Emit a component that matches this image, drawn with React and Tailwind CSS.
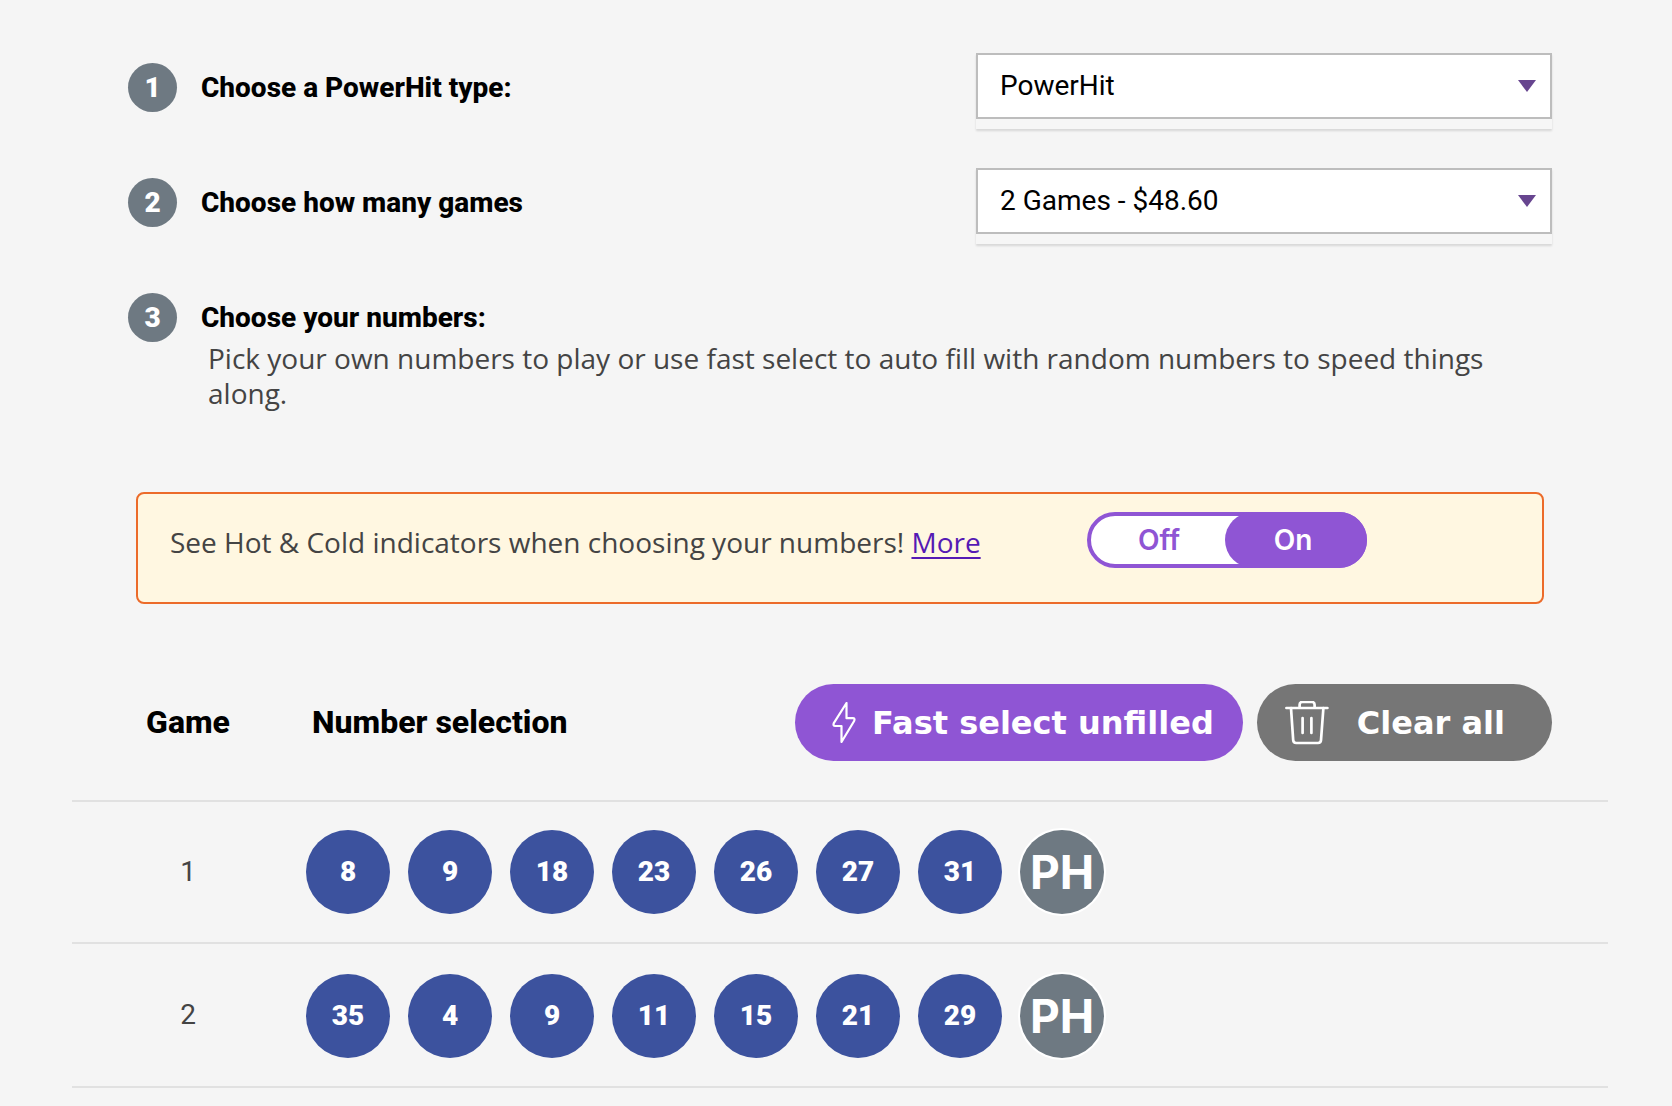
import React, { useState } from "react";

const games = [
  { id: 1, numbers: [8, 9, 18, 23, 26, 27, 31] },
  { id: 2, numbers: [35, 4, 9, 11, 15, 21, 29] },
];

function StepBadge({ children }) {
  return (
    <span className="flex size-[49px] shrink-0 items-center justify-center rounded-full bg-[#6e7982] text-[28px] font-black text-white">
      {children}
    </span>
  );
}

function SelectBox({ id, options }) {
  return (
    <div className="w-[576px] bg-[#f6f6f6] pb-2.5 shadow-[0_2px_2px_rgba(0,0,0,0.12)]">
      <div className="relative">
        <select
          id={id}
          className="block h-[66px] w-full appearance-none rounded-none border-2 border-[#bdbdbd] bg-white pl-[22px] pr-12 text-[28px] text-black"
        >
          {options.map((option) => (
            <option key={option}>{option}</option>
          ))}
        </select>
        <svg
          className="pointer-events-none absolute right-4 top-[27px] h-3 w-[18px] fill-[#67458f]"
          viewBox="0 0 18 12"
          aria-hidden="true"
        >
          <path d="M0 0h18L9 12z" />
        </svg>
      </div>
    </div>
  );
}

function SelectStep({ number, id, label, options }) {
  return (
    <div className="flex items-start justify-between">
      <div className="flex items-center gap-6 pt-2.5">
        <StepBadge>{number}</StepBadge>
        <label htmlFor={id} className="text-[28px] font-extrabold text-black">
          {label}
        </label>
      </div>
      <SelectBox id={id} options={options} />
    </div>
  );
}

function IndicatorToggle() {
  const [on, setOn] = useState(true);
  const base = "-my-1 flex cursor-pointer items-center justify-center rounded-full";
  const active = "bg-[#8f55d4] text-white";
  const idle = "text-[#8f55d4]";
  return (
    <fieldset
      aria-label="Hot and Cold indicators"
      className="flex h-14 w-[280px] shrink-0 rounded-full border-4 border-[#8f55d4] bg-white font-['Inter',sans-serif] text-[28px] font-semibold"
    >
      <label className={`${base} -ml-1 w-[138px] pl-1.5 ${on ? idle : active}`}>
        <input
          type="radio"
          name="indicators"
          className="sr-only"
          checked={!on}
          onChange={() => setOn(false)}
        />
        Off
      </label>
      <label className={`${base} -mr-1 w-[142px] pr-1.5 ${on ? active : idle}`}>
        <input
          type="radio"
          name="indicators"
          className="sr-only"
          checked={on}
          onChange={() => setOn(true)}
        />
        On
      </label>
    </fieldset>
  );
}

function BoltIcon() {
  return (
    <svg
      className="h-[42px] w-6"
      viewBox="0 1 24 42"
      fill="none"
      stroke="currentColor"
      strokeWidth="2.2"
      strokeLinejoin="round"
      aria-hidden="true"
    >
      <path d="M14.5 2 1.8 22.2Q.8 25 3.2 25H9.5V41L22 20.2Q23.4 17.2 20.8 17.2H14.5Z" />
    </svg>
  );
}

function TrashIcon() {
  return (
    <svg
      className="size-11"
      viewBox="0 1 44 44"
      fill="none"
      stroke="currentColor"
      strokeWidth="2.7"
      strokeLinecap="round"
      strokeLinejoin="round"
      aria-hidden="true"
    >
      <path d="M1.4 8H42.4" />
      <path d="M14.6 7.6V4.8Q14.6 2 17.4 2H26.8Q29.6 2 29.6 4.8V7.6" />
      <path d="M6 8 8.2 40.2Q8.4 43 11.2 43H33Q35.8 43 36 40.2L38.4 8" />
      <path d="M17.6 18V33M26.4 18V33" />
    </svg>
  );
}

export default function App() {
  return (
    <main className="min-h-screen bg-[#f5f5f5] pl-[72px] pr-16 pt-[53px] font-['Roboto',sans-serif]">
      <section className="px-14">
        <div className="flex flex-col gap-[39px]">
          <SelectStep
            number="1"
            id="hit-type"
            label="Choose a PowerHit type:"
            options={["PowerHit"]}
          />
          <SelectStep
            number="2"
            id="game-count"
            label="Choose how many games"
            options={["2 Games - $48.60"]}
          />
          <div>
            <div className="flex items-center gap-6 pt-2.5">
              <StepBadge>3</StepBadge>
              <h2 className="text-[28px] font-extrabold text-black">Choose your numbers:</h2>
            </div>
            <p className="-mt-px pl-20 font-['Open_Sans',sans-serif] text-[28px] leading-[35px] text-[#444444]">
              Pick your own numbers to play or use fast select to auto fill with random numbers to
              speed things along.
            </p>
          </div>
        </div>

        <div className="mx-2 mt-[81px] flex h-28 items-start justify-between rounded-lg border-2 border-[#ec6b2a] bg-[#fff7e1] pl-8 pr-[175px] pt-[18px]">
          <p className="font-['Open_Sans',sans-serif] text-[28px] leading-[60px] text-[#444444]">
            See Hot &amp; Cold indicators when choosing your numbers!{" "}
            <a href="#more" className="text-[#551ab4] underline decoration-2 underline-offset-4">
              More
            </a>
          </p>
          <IndicatorToggle />
        </div>
      </section>

      <table className="mt-20 w-full">
        <thead>
          <tr className="border-b-2 border-[#e1e1e1] text-[32px] text-black">
            <th scope="col" className="w-[232px] pb-10 text-center font-extrabold">
              Game
            </th>
            <th scope="col" className="pb-10 pl-2 text-left font-extrabold">
              Number selection
            </th>
            <td className="pb-[39px] pr-14">
              <div className="flex justify-end gap-3.5 font-['DejaVu_Sans',sans-serif] font-bold text-white">
                <button
                  type="button"
                  className="flex h-[77px] items-center gap-4 rounded-full bg-[#8f55d4] pl-[37px] pr-[29px]"
                >
                  <BoltIcon />
                  Fast select unfilled
                </button>
                <button
                  type="button"
                  className="flex h-[77px] items-center gap-7 rounded-full bg-[#767676] pl-7 pr-[47px]"
                >
                  <TrashIcon />
                  Clear all
                </button>
              </div>
            </td>
          </tr>
        </thead>
        <tbody>
          {games.map((game) => (
            <tr key={game.id} className="group border-b-2 border-[#e1e1e1] text-[28px]">
              <th scope="row" className="text-center font-normal text-[#444444]">
                {game.id}
              </th>
              <td colSpan={2} className="pb-7 pl-0.5 pt-[30px] group-first:pt-7">
                <ul className="flex gap-[18px]">
                  {game.numbers.map((n) => (
                    <li
                      key={n}
                      className="flex size-[84px] items-center justify-center rounded-full bg-[#3c529e] font-black text-white"
                    >
                      {n}
                    </li>
                  ))}
                  <li className="flex size-[84px] items-center justify-center rounded-full bg-[#6e7982] font-['Inter',sans-serif] text-[46px] font-bold text-white ring-2 ring-white">
                    PH
                  </li>
                </ul>
              </td>
            </tr>
          ))}
        </tbody>
      </table>
    </main>
  );
}
